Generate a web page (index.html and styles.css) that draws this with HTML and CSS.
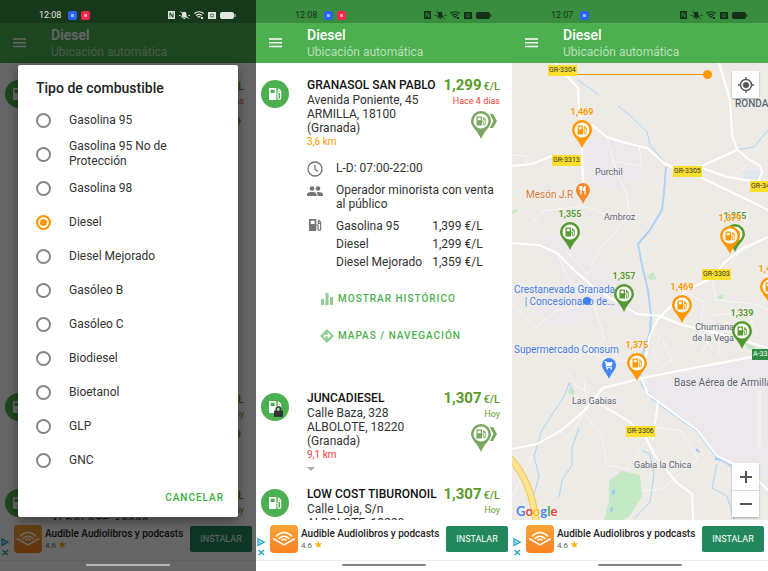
FILE: index.html
```html
<!DOCTYPE html>
<html lang="es">
<head>
  <meta charset="UTF-8">
  <meta name="viewport" content="width=device-width, initial-scale=1.0">
  <title>Diesel</title>
  <link rel="stylesheet" href="styles.css">
</head>
<body>

  <svg class="sprite" aria-hidden="true">
    <symbol id="pump" viewBox="0 0 24 24">
      <path fill-rule="evenodd" d="M3 3h11v18H3zM5.500 5.500v5h6v-5z"/>
      <path fill="none" stroke="currentColor" stroke-width="1.800" d="M14 12h2.500v6a2 2 0 0 0 4 0V8l-4-4M17 6v3.500h3.500"/>
    </symbol>
    <symbol id="menu" viewBox="0 0 14 10">
      <path d="M0 0h14v1.500H0zM0 4h14v1.500H0zM0 8h14v1.500H0z"/>
    </symbol>
    <symbol id="status" viewBox="0 0 68 10">
      <path fill-rule="evenodd" d="M0 1h7v8H0zM1.500 2.500v5h.8V4l2.200 3.500h1v-5h-.8V6L2.500 2.500z"/>
      <path d="M12.800 7.500h7L18.500 6V4a2.300 2.300 0 0 0-4.600 0v2zM15.300 8h2v1h-2z"/>
      <path fill="none" stroke="currentColor" d="M12.500 1.500l8 7M11 5.500h1.500M20.500 5.500H22"/>
      <path fill="none" stroke="currentColor" stroke-width="1.200" d="M26.300 3.500q4.700-3.500 9.400 0M28 5.400q3-2.200 6 0M29.500 7.200q1.500-1.200 3 0"/>
      <path d="M33 7h2v2h-2z"/>
      <path fill-rule="evenodd" d="M40 2h8v7h-8zM42.500 3.800v3.400h3V3.800z"/>
      <path d="M43 4.500h2v2h-2z"/>
      <rect x="52" y="2" width="14" height="7" rx="2"/>
      <path d="M66.500 4h1v3h-1z"/>
    </symbol>
    <symbol id="pin" viewBox="0 0 20 28">
      <path d="M10 0a10 10 0 0 0-10 10c0 6 7 10 10 18 3-8 10-12 10-18A10 10 0 0 0 10 0z"/>
      <circle cx="10" cy="10" r="7.500" fill="#fff"/>
      <use href="#pump" x="4" y="4" width="12" height="12"/>
    </symbol>
    <symbol id="pin-go" viewBox="0 0 26 28">
      <path fill-rule="evenodd" d="M10 0a10 10 0 0 0-10 10c0 6 7 10 10 18 3-8 10-12 10-18A10 10 0 0 0 10 0zM10 2.500a7.500 7.500 0 1 1 0 15 7.500 7.500 0 0 1 0-15z"/>
      <use href="#pump" x="4" y="4" width="12" height="12"/>
      <path d="M19 3h3l4 7-4 7h-3l1.500-3.500 2-3.500-2-3.500z"/>
    </symbol>
    <symbol id="adchoices" viewBox="0 0 8 18">
      <path fill="none" stroke="currentColor" stroke-width="1.300" d="M1 1v6.500l6-3.300zM3 3.500v2M1.500 12l5.500 5M7 12l-5.500 5"/>
    </symbol>
    <symbol id="audible" viewBox="0 0 28 28">
      <path fill="none" stroke="#fff" stroke-width="1.500" d="M3 13.500l11 6.500 11-6.500M6 11.500q8-8 16 0M8.500 14q5.500-5.500 11 0M11.500 15.500q2.500-2.500 5 0"/>
    </symbol>
  </svg>

  <main class="screens">

    <section class="phone dimmed">
      <header>
        <div class="statusbar">
          <time>12:08</time>
          <span class="app-dot blue"></span><span class="app-dot red"></span>
          <svg class="status-icons"><use href="#status"/></svg>
        </div>
        <div class="appbar">
          <button class="menu-btn" aria-label="Menú"><svg><use href="#menu"/></svg></button>
          <div>
            <h1>Diesel</h1>
            <p>Ubicación automática</p>
          </div>
        </div>
      </header>

      <div class="content list">
        <article class="station first">
          <span class="badge"><svg><use href="#pump"/></svg></span>
          <div class="station-info"></div>
          <div class="station-side">
            <p class="price">1,299<small>€/L</small></p>
            <p class="age old">Hace 4 días</p>
            <svg class="go"><use href="#pin-go"/></svg>
          </div>
        </article>
        <article class="station">
          <span class="badge"><svg><use href="#pump"/></svg></span>
          <div class="station-info"></div>
          <div class="station-side">
            <p class="price">1,307<small>€/L</small></p>
            <p class="age">Hoy</p>
            <svg class="go"><use href="#pin-go"/></svg>
          </div>
        </article>
        <article class="station">
          <span class="badge"><svg><use href="#pump"/></svg></span>
          <div class="station-info peek">
            <address>ALBOLOTE, 18220</address>
          </div>
          <div class="station-side">
            <p class="price">1,307<small>€/L</small></p>
            <p class="age">Hoy</p>
          </div>
        </article>
      </div>

      <footer>
        <div class="ad">
          <svg class="adchoices"><use href="#adchoices"/></svg>
          <svg class="ad-logo"><use href="#audible"/></svg>
          <div class="ad-text">
            <strong>Audible Audiolibros y podcasts</strong>
            <span>4.6 <i>★</i></span>
          </div>
          <button class="install">INSTALAR</button>
        </div>
        <div class="navbar"></div>
      </footer>

      <div class="scrim">
        <form class="dialog" role="dialog" aria-labelledby="fuel-title">
          <h2 id="fuel-title">Tipo de combustible</h2>
          <label><input type="radio" name="fuel">Gasolina 95</label>
          <label><input type="radio" name="fuel">Gasolina 95 No de Protección</label>
          <label><input type="radio" name="fuel">Gasolina 98</label>
          <label><input type="radio" name="fuel" checked>Diesel</label>
          <label><input type="radio" name="fuel">Diesel Mejorado</label>
          <label><input type="radio" name="fuel">Gasóleo B</label>
          <label><input type="radio" name="fuel">Gasóleo C</label>
          <label><input type="radio" name="fuel">Biodiesel</label>
          <label><input type="radio" name="fuel">Bioetanol</label>
          <label><input type="radio" name="fuel">GLP</label>
          <label><input type="radio" name="fuel">GNC</label>
          <button type="button" class="cancel">CANCELAR</button>
        </form>
      </div>
    </section>

    <section class="phone">
      <header>
        <div class="statusbar">
          <time>12:08</time>
          <span class="app-dot blue"></span><span class="app-dot red"></span>
          <svg class="status-icons"><use href="#status"/></svg>
        </div>
        <div class="appbar">
          <button class="menu-btn" aria-label="Menú"><svg><use href="#menu"/></svg></button>
          <div>
            <h1>Diesel</h1>
            <p>Ubicación automática</p>
          </div>
        </div>
      </header>

      <div class="content list">
        <article class="station first">
          <span class="badge"><svg><use href="#pump"/></svg></span>
          <div class="station-info">
            <h2>GRANASOL SAN PABLO</h2>
            <address>Avenida Poniente, 45<br>ARMILLA, 18100<br>(Granada)</address>
            <p class="distance near">3,6 km</p>
          </div>
          <div class="station-side">
            <p class="price">1,299<small>€/L</small></p>
            <p class="age old">Hace 4 días</p>
            <svg class="go"><use href="#pin-go"/></svg>
          </div>
          <div class="details">
            <svg class="detail-icon" viewBox="0 0 16 16"><path fill="none" stroke="currentColor" stroke-width="1.300" d="M8 1a7 7 0 1 0 0 14 7 7 0 0 0 0-14zM8 4v4.500l3 2"/></svg>
            <p>L-D: 07:00-22:00</p>
            <svg class="detail-icon" viewBox="0 0 16 16"><circle cx="5" cy="5.500" r="2.300"/><circle cx="11" cy="5.500" r="2.300"/><path d="M0 13v-1.500C0 9.500 3 9 5 9s4.500.5 4.500 2.500V13zM10.500 13v-2l-.8-1.800c2.500-.5 6.300 0 6.300 2.300V13z"/></svg>
            <p>Operador minorista con venta al público</p>
            <svg class="detail-icon"><use href="#pump"/></svg>
            <table>
              <tr><td>Gasolina 95</td><td>1,399 €/L</td></tr>
              <tr><td>Diesel</td><td>1,299 €/L</td></tr>
              <tr><td>Diesel Mejorado</td><td>1,359 €/L</td></tr>
            </table>
          </div>
          <div class="actions">
            <button><svg viewBox="0 0 14 14"><path d="M1 7h3v6H1zM5.500 1h3v12h-3zM10 5h3v8h-3z"/></svg>MOSTRAR HISTÓRICO</button>
            <button><svg viewBox="0 0 14 14"><path d="M7 0l7 7-7 7-7-7z"/><path fill="none" stroke="#fff" stroke-width="1.300" d="M4.500 9V6.500H9M7.800 4.300L10 6.500 7.800 8.700"/></svg>MAPAS / NAVEGACIÓN</button>
          </div>
        </article>
        <article class="station">
          <span class="badge">
            <svg><use href="#pump"/></svg>
            <svg class="lock" viewBox="0 0 10 12"><path d="M0 5h10v7H0z"/><path fill="none" stroke="currentColor" stroke-width="1.500" d="M2.500 5.500V3.300a2.500 2.500 0 0 1 5 0v2.200"/></svg>
          </span>
          <div class="station-info">
            <h2>JUNCADIESEL</h2>
            <address>Calle Baza, 328<br>ALBOLOTE, 18220<br>(Granada)</address>
            <p class="distance far">9,1 km</p>
            <svg class="expand" viewBox="0 0 8 4"><path d="M0 0h8L4 4z"/></svg>
          </div>
          <div class="station-side">
            <p class="price">1,307<small>€/L</small></p>
            <p class="age">Hoy</p>
            <svg class="go"><use href="#pin-go"/></svg>
          </div>
        </article>
        <article class="station">
          <span class="badge"><svg><use href="#pump"/></svg></span>
          <div class="station-info">
            <h2>LOW COST TIBURONOIL</h2>
            <address>Calle Loja, S/n<br>ALBOLOTE, 18220</address>
          </div>
          <div class="station-side">
            <p class="price">1,307<small>€/L</small></p>
            <p class="age">Hoy</p>
          </div>
        </article>
      </div>

      <footer>
        <div class="ad">
          <svg class="adchoices"><use href="#adchoices"/></svg>
          <svg class="ad-logo"><use href="#audible"/></svg>
          <div class="ad-text">
            <strong>Audible Audiolibros y podcasts</strong>
            <span>4.6 <i>★</i></span>
          </div>
          <button class="install">INSTALAR</button>
        </div>
        <div class="navbar"></div>
      </footer>
    </section>

    <section class="phone">
      <header>
        <div class="statusbar">
          <time>12:07</time>
          <span class="app-dot blue"></span>
          <svg class="status-icons"><use href="#status"/></svg>
        </div>
        <div class="appbar">
          <button class="menu-btn" aria-label="Menú"><svg><use href="#menu"/></svg></button>
          <div>
            <h1>Diesel</h1>
            <p>Ubicación automática</p>
          </div>
        </div>
      </header>

      <div class="content map">
        <svg class="terrain" viewBox="0 63 256 457" preserveAspectRatio="xMinYMin slice">
          <!-- urban areas -->
          <g fill="#ece8ec">
            <path d="M72 140l22-3 36 12-2 30-28 12-28-16z"/>
            <path d="M28 240l20-8 24 18 14 16 24 18 16 30-14 4-30-18-10 18-24 10-24-16 4-24 24-4-8-24z"/>
            <path d="M128 383l80-18 48-12v124l-36-7-14-16-20-22-30-20-18-10z"/>
            <path d="M232 170h18v9h-18z" fill="#e0e5f0"/>
          </g>
          <g fill="#c5e8c5">
            <path d="M97 481l13-10 18 4 2 21-12 20-8 4H92l5-18z"/>
            <path d="M135 276l6-4 4 7-7 1zM206 296l5-2v5h-5zM0 211l5-3v4l-5 2zM57 388l6 3-2 4-5-2zM232 342l10 4 2 5-8-2z"/>
          </g>
          <!-- rivers -->
          <g class="river">
            <path d="M66 80l21 15M106 106l14 11 15 15 3 13 15 18"/>
            <path d="M256 130l-14 17-17 3"/>
            <path d="M57 383l-4 12-23 35-8 26 5 20-7 26M67 428l-7 20v17l-10 15-3 17M128 450l10 4 4 20-4 28-16 17M205 464l-5 24 15 8 7 23M57 383l5 10"/>
            <path class="wide" d="M154 167l-2 25-2 18-12 20-12 14 4 21 6 25 3 26-1 16-8 24-2 15 2 14 11 14 19 14 25 18 19 25 15 10"/>
          </g>
          <g fill="#9fcbf8"><path d="M100 491l3-2v4l-3 3zM98 509l3-3v4l-2 3zM203 457l7 2v2l-7-1zM184 448l4 3v2l-4-2z"/></g>
          <!-- roads -->
          <g class="minor">
            <path d="M95 138l6 22 7 20 7 14 2 20-12 16-16 18-10 18M127 145l3 21-30-5M0 155l14 1v10M18 225l14-14 38-5 14 4 14 8M45 253l10 24 12 10M55 252l20 22 10-8M0 303l24 24 20-16 18-4M80 300l8 24 4 16-14 12M60 360l14-8 30 10 24-4M56 372l8 14 20 12M142 332l8 8 10 20-10 6-10-14 8-14 16 16M170 290l22 12-4 28 12 20M203 300l40 4 13 6M200 315l36-2 8 20M186 340l30-18 20 14M190 352l14-26 16 8M210 330l-4 26M200 278l4 24M213 240l22-18V205M72 413l18 24 5 28 20 4M137 438l-22 32M140 427l30 4 12 22 4 6-36 30-20 2M48 432l8 6 16-25M0 498l20-42M72 380l2 20M240 160l-20 18M235 242l-16 22"/>
            <path d="M246 390v57M248 390v57"/>
          </g>
          <g class="major">
            <path d="M43 63l13 14 10 11 1 20 3 14M80 125l15 12 15 5 25 6 17 15 13 7 25-4 35-16"/>
            <path d="M207 63l11 37 2 35 5 14 10 9 13 8 2 6-4 11"/>
            <path d="M0 166l20-2 20-8 30 7M70 148l1 36M188 177l27 13 25 12 16 8M190 168l25 9 30 5"/>
            <path d="M0 243l27 2 18 8 17 17 23 20 20 12 20 12 23 2 22 9 30 7 56 16"/>
            <path d="M256 237l-26 12-17 13-13 16-25 12-15 15-15 15-8 18-3 20"/>
            <path d="M0 449l25-5 25-14 23-20 18-22 40-10 40-8 85-16M88 404l30 18 16 16 8 16 22 28 16 12 1 26M146 400l-5 40M128 376l8 18 24 18 25 18 20 26 30 14 21 20"/>
          </g>
          <path fill="none" stroke="#f0c94b" stroke-width="7" d="M-2 458q22 24 26 64"/>
          <path fill="none" stroke="#fde293" stroke-width="5" d="M-2 458q22 24 26 64"/>
        </svg>

        <span class="place p-purchil">Purchil</span>
        <span class="place p-ambroz">Ambroz</span>
        <span class="place p-gabias">Las Gabias</span>
        <span class="place p-chica">Gabia la Chica</span>
        <span class="place p-churriana">Churriana<br>de la Vega</span>
        <span class="place p-base">Base Aérea de Armilla</span>
        <span class="place p-ronda">RONDA</span>
        <span class="place food p-meson">Mesón J.R</span>
        <span class="place shop p-cresta">Crestanevada Granada<br>| Concesionario de...</span>
        <span class="place shop p-consum">Supermercado Consum</span>
        <span class="dot"></span>

        <input class="radius" type="range" min="0" max="100" value="100" aria-label="Radio">

        <span class="road r-3304">GR-3304</span>
        <span class="road r-3313">GR-3313</span>
        <span class="road r-3305">GR-3305</span>
        <span class="road r-34">GR-34</span>
        <span class="road r-3303">GR-3303</span>
        <span class="road r-3306">GR-3306</span>
        <span class="road green r-a33">A-33</span>

        <svg class="poi poi-food" viewBox="0 0 14 21"><path d="M7 0a7 7 0 0 0-7 7c0 5 5 8 7 14 2-6 7-9 7-14A7 7 0 0 0 7 0z"/><path fill="none" stroke="#fff" stroke-width="1.200" d="M4 3v3q0 1 1 1t1-1V3M5 3v8.500M9 11.500V3.500q-1.500 1-1.500 4H9"/></svg>
        <svg class="poi poi-shop" viewBox="0 0 14 21"><path d="M7 0a7 7 0 0 0-7 7c0 5 5 8 7 14 2-6 7-9 7-14A7 7 0 0 0 7 0z"/><path fill="#fff" d="M2.500 3h1.700l.5 1.200h6L9.500 8H5v.7h5v1H4V8L3.300 4H2.500z"/><path fill="#fff" d="M4.500 10h1.500v1.500H4.500zM8.500 10H10v1.500H8.500z"/></svg>

        <div class="pin cheap m1"><b>1,355</b><svg><use href="#pin"/></svg></div>
        <div class="pin m2"><b>1,379</b><svg><use href="#pin"/></svg></div>
        <div class="pin m3"><b>1,469</b><svg><use href="#pin"/></svg></div>
        <div class="pin cheap m4"><b>1,355</b><svg><use href="#pin"/></svg></div>
        <div class="pin cheap m5"><b>1,357</b><svg><use href="#pin"/></svg></div>
        <div class="pin m6"><b>1,469</b><svg><use href="#pin"/></svg></div>
        <div class="pin m7"><b>1,375</b><svg><use href="#pin"/></svg></div>
        <div class="pin cheap m8"><b>1,339</b><svg><use href="#pin"/></svg></div>
        <div class="pin m9"><b>1,469</b><svg><use href="#pin"/></svg></div>

        <button class="map-btn locate" aria-label="Mi ubicación">
          <svg viewBox="0 0 16 16"><circle cx="8" cy="8" r="3"/><path fill="none" stroke="currentColor" stroke-width="1.400" d="M8 2.500a5.500 5.500 0 1 0 0 11 5.500 5.500 0 0 0 0-11zM8 0v3M8 13v3M0 8h3M13 8h3"/></svg>
        </button>
        <div class="zoom">
          <button class="map-btn" aria-label="Acercar"><svg viewBox="0 0 16 16"><path d="M2 7h5V2h2v5h5v2H9v5H7V9H2z"/></svg></button>
          <button class="map-btn" aria-label="Alejar"><svg viewBox="0 0 16 16"><path d="M2 7h12v2H2z"/></svg></button>
        </div>
        <span class="google"><i>G</i><i>o</i><i>o</i><i>g</i><i>l</i><i>e</i></span>
      </div>

      <footer>
        <div class="ad">
          <svg class="adchoices"><use href="#adchoices"/></svg>
          <svg class="ad-logo"><use href="#audible"/></svg>
          <div class="ad-text">
            <strong>Audible Audiolibros y podcasts</strong>
            <span>4.6 <i>★</i></span>
          </div>
          <button class="install">INSTALAR</button>
        </div>
        <div class="navbar"></div>
      </footer>
    </section>

  </main>
</body>
</html>
```

FILE: styles.css
```css
* {
  box-sizing: border-box;
}

body {
  margin: 0;
  font-family: Roboto, "Liberation Sans", sans-serif;
  color: #333;
}

h1, h2, p {
  margin: 0;
}

button {
  border: none;
  background: none;
  padding: 0;
  font-family: inherit;
  cursor: pointer;
}

svg {
  fill: currentColor;
  display: block;
}

.sprite {
  position: absolute;
  width: 0;
  height: 0;
}

.screens {
  display: grid;
  grid-template-columns: repeat(3, 1fr);
  height: 100vh;
}

.phone {
  position: relative;
  display: flex;
  flex-direction: column;
  min-width: 0;
  min-height: 0;
  overflow: hidden;
  background: #fff;
}

/* top bars */
.statusbar {
  display: flex;
  align-items: center;
  gap: 4px;
  height: 23px;
  padding: 7px 20px 0 39px;
  background: #388e3c;
  color: #15301a;
  font-size: 9px;
}

.statusbar time {
  margin-right: 3px;
}

.app-dot {
  width: 9px;
  height: 9px;
  border-radius: 2px;
  border: 3px solid #2962ff;
  background: #9db8ff;
}

.app-dot.red {
  border-color: #f5274b;
  background: #ff9aa8;
}

.status-icons {
  width: 68px;
  height: 10px;
  margin-left: auto;
}

.appbar {
  display: flex;
  align-items: center;
  gap: 25px;
  height: 40px;
  padding-left: 13px;
  background: #4caf50;
  color: #fff;
}

.menu-btn {
  color: #fff;
}

.menu-btn svg {
  width: 13px;
  height: 10px;
}

.appbar h1 {
  font-size: 14px;
  line-height: 18px;
  font-weight: 500;
}

.appbar p {
  font-size: 12px;
  line-height: 16px;
  color: #b9e0ba;
}

.content {
  flex: 1;
  min-height: 0;
  position: relative;
  overflow: hidden;
}

/* station list */
.list {
  padding: 14px 12px 0 5px;
}

.station {
  display: grid;
  grid-template-columns: 28px 1fr auto;
  column-gap: 18px;
  min-height: 96px;
  align-content: start;
}

.station.first {
  min-height: 313px;
}

.station-info {
  min-width: 0;
  white-space: nowrap;
}

.station-info.peek {
  padding-top: 30px;
}

.badge {
  position: relative;
  display: flex;
  align-items: center;
  justify-content: center;
  width: 28px;
  height: 28px;
  margin-top: 3px;
  border-radius: 50%;
  background: #4caf50;
  color: #fff;
}

.badge svg {
  width: 16px;
  height: 16px;
}

.badge .lock {
  position: absolute;
  right: 6px;
  bottom: 4px;
  width: 9px;
  height: 11px;
  color: #333;
}

.station h2 {
  font-size: 12px;
  line-height: 16px;
  font-weight: 500;
  color: #111;
}

.station address {
  font-style: normal;
  font-size: 12px;
  line-height: 14px;
}

.distance {
  font-size: 10px;
  line-height: 14px;
}

.near {
  color: #ff9800;
}

.far {
  color: #f44336;
}

.expand {
  width: 8px;
  height: 4px;
  margin-top: 5px;
  color: #aaa;
}

.station-side {
  display: flex;
  flex-direction: column;
  align-items: flex-end;
  margin-left: -18px;
}

.price {
  font-size: 15px;
  line-height: 16px;
  font-weight: 700;
  color: #5a9a2c;
}

.price small {
  margin-left: 2px;
  font-size: 11px;
  font-weight: 500;
}

.age {
  font-size: 9px;
  line-height: 12px;
  color: #689f38;
}

.age.old {
  color: #f44336;
}

.go {
  width: 26px;
  height: 28px;
  margin: 4px 3px 0 0;
  color: #7ba860;
}

.details {
  grid-column: 2 / 4;
  display: grid;
  grid-template-columns: 16px 1fr;
  gap: 6px 13px;
  margin-top: 12px;
  font-size: 12px;
  line-height: 14px;
}

.detail-icon {
  width: 16px;
  height: 16px;
  color: #757575;
}

.details table {
  border-collapse: collapse;
  justify-self: start;
}

.details td {
  padding: 2px 10px 2px 0;
}

.actions {
  grid-column: 2 / 4;
  display: flex;
  flex-direction: column;
  align-items: flex-start;
  gap: 23px;
  margin: 21px 0 0 13px;
}

.actions button {
  display: flex;
  align-items: center;
  gap: 4px;
  font-size: 10px;
  line-height: 14px;
  font-weight: 500;
  letter-spacing: 1px;
  color: #4caf50;
}

.actions svg {
  width: 14px;
  height: 14px;
  color: #8fce92;
}

/* ad banner */
.ad {
  display: flex;
  align-items: center;
  height: 40px;
  padding: 0 4px 2px 1px;
  background: #fff;
}

.adchoices {
  width: 8px;
  height: 18px;
  margin: 16px 5px 0 0;
  color: #1fa5c9;
}

.ad-logo {
  width: 28px;
  height: 28px;
  border-radius: 4px;
  background: linear-gradient(#f9a436, #f58220);
}

.ad-text {
  flex: 1;
  min-width: 0;
  margin-left: 3px;
  white-space: nowrap;
}

.ad-text strong {
  display: block;
  font-size: 10px;
  line-height: 13px;
  font-weight: 500;
  color: #222;
}

.ad-text span {
  display: block;
  font-size: 8px;
  line-height: 10px;
  color: #666;
}

.ad-text i {
  font-size: 10px;
  font-style: normal;
  color: #fbb400;
}

.install {
  width: 62px;
  height: 26px;
  border-radius: 2px;
  background: #22875c;
  color: #fff;
  font-size: 9px;
}

.navbar {
  height: 11px;
  padding-top: 3px;
  border-top: 1px solid #eee;
  background: #fff;
}

.navbar::before {
  content: "";
  display: block;
  width: 33%;
  height: 2px;
  margin: 0 auto;
  border-radius: 1px;
  background: #808080;
}

/* fuel dialog */
.scrim {
  position: absolute;
  inset: 0;
  padding: 65px 18px 0;
  background: rgba(0, 0, 0, 0.6);
}

.dimmed .statusbar {
  position: relative;
  z-index: 2;
  background: #17381a;
  color: #e0e5e0;
}

.dimmed .navbar::before {
  position: relative;
  z-index: 2;
  background: #b8b8b8;
}

.dialog {
  display: flex;
  flex-direction: column;
  padding: 14px 14px 11px 18px;
  border-radius: 2px;
  background: #fff;
  box-shadow: 0 4px 12px rgba(0, 0, 0, 0.4);
}

.dialog h2 {
  margin-bottom: 6px;
  font-size: 14px;
  line-height: 18px;
  font-weight: 500;
  color: #222;
}

.dialog label {
  display: flex;
  align-items: center;
  gap: 18px;
  height: 34px;
  padding-right: 10px;
  font-size: 12px;
  line-height: 15px;
}

.dialog input {
  appearance: none;
  flex: none;
  width: 15px;
  height: 15px;
  margin: 0;
  border: 2px solid #858585;
  border-radius: 50%;
}

.dialog input:checked {
  border-color: #ff9800;
  background: #ff9800;
  box-shadow: inset 0 0 0 2px #fff;
}

.cancel {
  align-self: flex-end;
  margin-top: 12px;
  font-size: 10px;
  line-height: 17px;
  font-weight: 500;
  letter-spacing: 1px;
  color: #3cae40;
}

/* map */
.map {
  background: #eeebe7;
}

.terrain {
  width: 100%;
  height: 100%;
}

.terrain .river,
.terrain .minor,
.terrain .major {
  fill: none;
  stroke-linejoin: round;
}

.river {
  stroke: #a9d3f7;
  stroke-width: 1;
}

.river .wide {
  stroke-width: 2;
}

.minor {
  stroke: #f8f7f5;
  stroke-width: 1;
}

.major {
  stroke: #fff;
  stroke-width: 2;
}

.place,
.road,
.pin,
.poi,
.dot,
.radius,
.locate,
.zoom,
.google {
  position: absolute;
}

.place {
  font-size: 9px;
  line-height: 11px;
  color: #5a6370;
  white-space: nowrap;
  text-shadow: 0 0 2px #fff;
}

.p-purchil { left: 83px; top: 104px; }
.p-ambroz { left: 92px; top: 149px; }
.p-gabias { left: 60px; top: 333px; }
.p-chica { left: 122px; top: 397px; }
.p-churriana { right: 34px; top: 259px; text-align: right; }
.p-base { left: 162px; top: 314px; font-size: 10px; }
.p-ronda { left: 223px; top: 35px; font-size: 10px; font-weight: 500; }
.p-meson { left: 14px; top: 126px; }
.p-cresta { left: 2px; top: 221px; text-align: right; }
.p-consum { left: 2px; top: 281px; }

.place.food {
  font-size: 10px;
  color: #d9752b;
}

.place.shop {
  font-size: 10px;
  line-height: 12px;
  color: #3f7de0;
}

.dot {
  left: 71px;
  top: 234px;
  width: 8px;
  height: 8px;
  border-radius: 50%;
  background: #3b82f0;
}

.road {
  height: 11px;
  padding: 0 1px;
  background: #fbdf2e;
  color: #333;
  font-size: 7px;
  line-height: 11px;
  white-space: nowrap;
}

.road.green {
  background: #2f8d46;
  color: #fff;
}

.r-3304 { left: 36px; top: 2px; }
.r-3313 { left: 40px; top: 92px; }
.r-3305 { left: 161px; top: 103px; }
.r-34 { left: 238px; top: 118px; }
.r-3303 { left: 190px; top: 206px; }
.r-3306 { left: 114px; top: 363px; }
.r-a33 { left: 240px; top: 286px; }

.radius {
  appearance: none;
  left: 60px;
  top: 7px;
  width: 140px;
  height: 9px;
  margin: 0;
  background: linear-gradient(#ff9800, #ff9800) center / 100% 1px no-repeat;
}

.radius::-webkit-slider-thumb {
  appearance: none;
  width: 9px;
  height: 9px;
  border-radius: 50%;
  background: #ff9800;
}

.poi {
  width: 14px;
  height: 21px;
}

.poi-food {
  left: 64px;
  top: 120px;
  color: #f28c28;
}

.poi-shop {
  left: 90px;
  top: 295px;
  color: #4285f4;
}

.pin {
  display: flex;
  flex-direction: column;
  align-items: center;
  gap: 2px;
  width: 30px;
  color: #ff9800;
}

.pin b {
  font-size: 9px;
  line-height: 12px;
  font-weight: 700;
  text-shadow: 0 0 2px #fff;
}

.pin svg {
  width: 20px;
  height: 28px;
}

.pin.cheap {
  color: #559a2e;
}

.m1 { left: 208px; top: 147px; }
.m2 { left: 203px; top: 149px; }
.m3 { left: 55px; top: 43px; }
.m4 { left: 43px; top: 145px; }
.m5 { left: 97px; top: 207px; }
.m6 { left: 155px; top: 218px; }
.m7 { left: 110px; top: 276px; }
.m8 { left: 215px; top: 244px; }
.m9 { left: 243px; top: 200px; }

.map-btn {
  display: flex;
  align-items: center;
  justify-content: center;
  width: 27px;
  height: 27px;
  background: #fff;
  color: #555;
}

.map-btn svg {
  width: 16px;
  height: 16px;
}

.locate,
.zoom {
  right: 9px;
  box-shadow: 0 1px 2px rgba(0, 0, 0, 0.3);
}

.locate {
  top: 8px;
}

.zoom {
  bottom: 3px;
}

.zoom .map-btn + .map-btn {
  border-top: 1px solid #ddd;
}

.google {
  left: 4px;
  bottom: 1px;
  font-family: Lato, sans-serif;
  font-size: 13px;
  line-height: 16px;
  font-weight: 700;
  text-shadow: 0 0 2px #fff;
}

.google i {
  font-style: normal;
  color: #4285f4;
}

.google i:nth-child(2),
.google i:nth-child(6) {
  color: #ea4335;
}

.google i:nth-child(3) {
  color: #fbbc05;
}

.google i:nth-child(5) {
  color: #34a853;
}
```
